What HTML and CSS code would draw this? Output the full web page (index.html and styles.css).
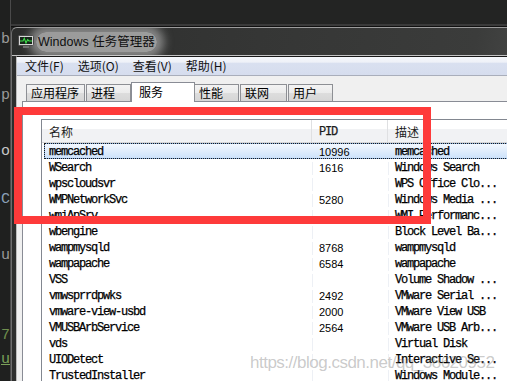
FILE: index.html
```html
<!DOCTYPE html>
<html>
<head>
<meta charset="utf-8">
<title>Windows 任务管理器</title>
<link rel="stylesheet" href="styles.css">
</head>
<body>
<div class="desk">
  <pre class="code"><span class="c1">b</span>






<span class="c1">p:</span>






<span class="c2">o;</span>





<span class="c3">C</span>






<span class="c1">ul</span>









<span class="c4">7</span>


<span class="c5">u</span></pre>
  <div class="topstrip"></div>
  <div class="window">
    <div class="titlebar">
      <svg class="appicon" width="16" height="13" viewBox="0 0 16 13">
        <rect x="0.5" y="0.5" width="15" height="10" rx="1" fill="#d6d6d6" stroke="#4a4a4a"/>
        <rect x="2" y="2" width="12" height="7" fill="#17261a"/>
        <polyline points="2,6 5,6 6.3,3.3 8,8 9.6,4.6 11,6 14,6" fill="none" stroke="#3ee04a" stroke-width="1.1"/>
        <rect x="5" y="11" width="6" height="2" fill="#6d6d6d"/>
      </svg>
      <span class="title">Windows 任务管理器</span>
    </div>
    <div class="client">
      <div class="menubar">
        <span class="mi">文件(F)</span>
        <span class="mi">选项(O)</span>
        <span class="mi">查看(V)</span>
        <span class="mi">帮助(H)</span>
      </div>
      <div class="tabarea">
        <div class="tabs">
          <div class="tab">应用程序</div>
          <div class="tab">进程</div>
          <div class="tab sel">服务</div>
          <div class="tab">性能</div>
          <div class="tab wide">联网</div>
          <div class="tab">用户</div>
        </div>
        <div class="panel">
          <div class="list">
            <div class="lhead">
              <div class="hc">名称</div>
              <div class="hc mono">PID</div>
              <div class="hc">描述</div>
            </div>
            <div class="row sel"><span class="n">memcached</span><span class="p">10996</span><span class="d">memcached</span></div>
            <div class="row"><span class="n">WSearch</span><span class="p">1616</span><span class="d">Windows Search</span></div>
            <div class="row"><span class="n">wpscloudsvr</span><span class="p"></span><span class="d">WPS Office Clo...</span></div>
            <div class="row"><span class="n">WMPNetworkSvc</span><span class="p">5280</span><span class="d">Windows Media ...</span></div>
            <div class="row"><span class="n">wmiApSrv</span><span class="p"></span><span class="d">WMI Performanc...</span></div>
            <div class="row"><span class="n">wbengine</span><span class="p"></span><span class="d">Block Level Ba...</span></div>
            <div class="row"><span class="n">wampmysqld</span><span class="p">8768</span><span class="d">wampmysqld</span></div>
            <div class="row"><span class="n">wampapache</span><span class="p">6584</span><span class="d">wampapache</span></div>
            <div class="row"><span class="n">VSS</span><span class="p"></span><span class="d">Volume Shadow ...</span></div>
            <div class="row"><span class="n">vmwsprrdpwks</span><span class="p">2492</span><span class="d">VMware Serial ...</span></div>
            <div class="row"><span class="n">vmware-view-usbd</span><span class="p">2000</span><span class="d">VMware View USB</span></div>
            <div class="row"><span class="n">VMUSBArbService</span><span class="p">2564</span><span class="d">VMware USB Arb...</span></div>
            <div class="row"><span class="n">vds</span><span class="p"></span><span class="d">Virtual Disk</span></div>
            <div class="row"><span class="n">UIODetect</span><span class="p"></span><span class="d">Interactive Se...</span></div>
            <div class="row"><span class="n">TrustedInstaller</span><span class="p"></span><span class="d">Windows Module...</span></div>
          </div>
        </div>
      </div>
    </div>
  </div>
  <div class="redbox"></div>
  <div class="watermark">https://blog.csdn.net/qq_38620952</div>
</div>
</body>
</html>
```

FILE: styles.css
```css
html, body {
  margin: 0;
  padding: 0;
  width: 507px;
  height: 381px;
  overflow: hidden;
  background: #222322;
}

.desk {
  position: relative;
  display: grid;
  grid-template-columns: 11px 560px;
  grid-template-rows: 27px 1fr;
  width: 507px;
  height: 381px;
  overflow: hidden;
}

.code {
  grid-row: 1 / 3;
  grid-column: 1;
  margin: 0;
  padding: 36px 0 0 1px;
  font-family: "Liberation Mono", monospace;
  font-size: 15px;
  line-height: 8px;
  color: #8d8d8d;
  background: #1f201f;
  border-right: 1px solid #4a4a4a;
  overflow: hidden;
}
.code .c1 { color: #9a9a9a; }
.code .c2 { color: #c8c8c8; }
.code .c3 { color: #8aa0b8; }
.code .c4 { color: #6f8f4e; }
.code .c5 { color: #7aa05a; text-decoration: underline; }

.topstrip {
  grid-row: 1;
  grid-column: 2;
  background: #232423;
  border-bottom: 1px solid #101010;
  box-shadow: inset 0 -2px 0 #3a3a3a;
}

.window {
  grid-row: 2;
  grid-column: 2;
  display: flex;
  flex-direction: column;
  min-height: 0;
  border-top: 1px solid #9c9c9c;
  border-left: 1px solid #6e6e6e;
  border-top-left-radius: 6px;
  padding-left: 4px;
  background: linear-gradient(100deg, #2c2d2c 0%, #353635 40%, #3b3c3b 75%, #4a4b4a 88%, #2f302f 95%, #343534 100%);
  overflow: hidden;
}

.titlebar {
  flex: none;
  height: 27px;
  display: flex;
  align-items: center;
  border-bottom: 1px solid #c4c4c4;
  margin-left: -4px;
  padding-left: 6px;
}

.appicon {
  display: block;
  flex: none;
  position: relative;
  z-index: 1;
}

.title {
  margin-left: 2px;
  font-family: "Liberation Sans", "Noto Sans CJK SC", sans-serif;
  font-size: 12.5px;
  line-height: 16px;
  color: #101010;
  padding: 2px 2px;
  border-radius: 10px;
  background: rgba(222, 222, 222, 0.62);
  box-shadow: 0 0 10px 7px rgba(205, 205, 205, 0.55);
}

.client {
  flex: none;
  display: flex;
  flex-direction: column;
  border-top: 1px solid #181818;
  border-left: 1px solid #bcbcbc;
  background: #f0f0f0;
}

.menubar {
  flex: none;
  height: 18px;
  display: flex;
  align-items: center;
  padding-left: 1px;
  border-bottom: 1px solid #a9aebb;
  background: linear-gradient(#f5f7fb 0%, #eef1f8 28%, #d9e0f0 36%, #d6ddee 100%);
  font-family: "Noto Sans CJK SC", sans-serif;
  font-size: 12px;
  color: #111;
}
.mi {
  padding: 0 7px;
  line-height: 18px;
}

.tabarea {
  flex: none;
  display: flex;
  flex-direction: column;
  padding: 6px 0 0 5px;
  background: #f0f0f0;
}

.tabs {
  flex: none;
  display: flex;
  align-items: flex-end;
  height: 20px;
  padding-left: 4px;
  margin-bottom: -1px;
  position: relative;
  z-index: 1;
}

.tab {
  box-sizing: border-box;
  height: 17px;
  min-width: 45px;
  margin-bottom: 1px;
  margin-right: 1px;
  padding: 0 5px 0 4px;
  border: 1px solid #8d8f94;
  border-bottom: none;
  background: linear-gradient(#f3f3f3 0%, #ebebeb 50%, #dddddd 51%, #d6d6d6 100%);
  font-family: "Noto Sans CJK SC", sans-serif;
  font-size: 12px;
  line-height: 16px;
  color: #000;
  white-space: nowrap;
}
.tab.wide { min-width: 47px; }
.tab.sel {
  height: 20px;
  min-width: 64px;
  margin: 0 -1px 0 -1px;
  padding-left: 7px;
  background: #ffffff;
  border-color: #898c95;
  line-height: 18px;
}

.panel {
  flex: none;
  border: 1px solid #898c95;
  background: #ffffff;
  padding: 17px 0 0 18px;
}

.list {
  border: 1px solid #828790;
  border-right: none;
  background: #fff;
  height: 400px;
}

.lhead {
  display: grid;
  grid-template-columns: 270px 76px 1fr;
  height: 22px;
  border-bottom: 1px solid #d5d5d5;
  background: linear-gradient(#ffffff 0%, #ffffff 40%, #f1f2f4 41%, #f1f2f4 100%);
}
.hc {
  box-sizing: border-box;
  padding: 2px 0 0 7px;
  border-right: 1px solid #dfe0e2;
  font-family: "Noto Sans CJK SC", sans-serif;
  font-size: 12px;
  line-height: 20px;
  color: #1b1b1b;
}
.hc.mono {
  font-family: "Liberation Mono", monospace;
  letter-spacing: -1.2px;
  -webkit-text-stroke: 0.25px #1b1b1b;
}

.row {
  display: grid;
  grid-template-columns: 267px 76px 1fr;
  height: 16px;
  box-sizing: border-box;
  margin-left: 2px;
  padding-top: 2px;
  border: 1px solid transparent;
  font-family: "Liberation Mono", monospace;
  font-size: 12px;
  line-height: 13px;
  color: #000;
  white-space: pre;
  -webkit-text-stroke: 0.25px #000;
}
.row.sel {
  border-color: #84acdd;
  outline: 1px dotted #1a1a1a;
  outline-offset: -1px;
  background: linear-gradient(#f3f8fe 0%, #e2eefc 45%, #cde2fb 100%);
}
.row .n {
  padding-left: 4px;
  letter-spacing: -1.2px;
}
.row .p {
  padding-left: 6px;
  border-left: 1px solid #edf0f5;
  font-family: "Liberation Sans", sans-serif;
  font-size: 11px;
  -webkit-text-stroke: 0;
}
.row .d {
  padding-left: 6px;
  border-left: 1px solid #edf0f5;
  letter-spacing: -1.2px;
}
.row.sel .p, .row.sel .d { border-left-color: transparent; }

.redbox {
  position: absolute;
  left: 14px;
  top: 107px;
  width: 417px;
  height: 117px;
  box-sizing: border-box;
  border: 8px solid #fe3a3a;
}

.watermark {
  position: absolute;
  left: 250px;
  top: 352px;
  font-family: "Liberation Sans", sans-serif;
  font-size: 17px;
  letter-spacing: -0.5px;
  line-height: 22px;
  color: rgba(120, 120, 120, 0.4);
  white-space: nowrap;
}
```
